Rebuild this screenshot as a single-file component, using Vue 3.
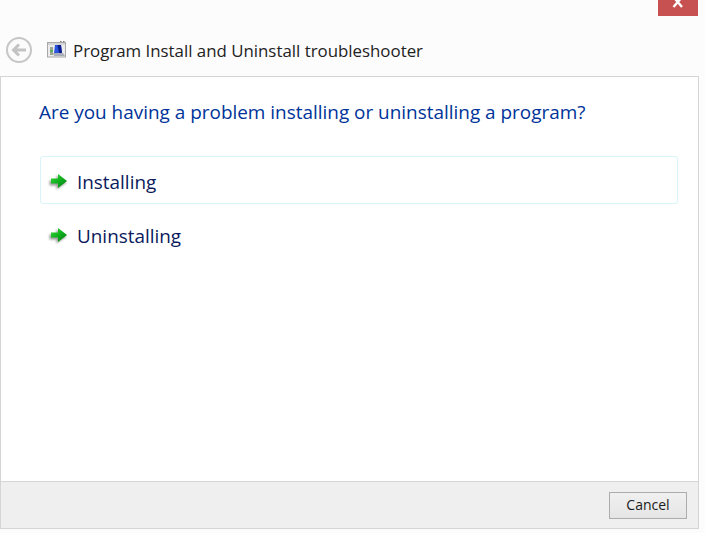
<script setup>
const title = 'Program Install and Uninstall troubleshooter'
const question = 'Are you having a problem installing or uninstalling a program?'
const options = [
  { label: 'Installing', hover: true },
  { label: 'Uninstalling', hover: false }
]
</script>

<template>
  <div class="window">
    <div class="titlebar">
      <button class="close" aria-label="Close">
        <svg width="12" height="8" viewBox="0 0 12 8"><path d="M1.5 -3 L10 7 M10 -3 L1.5 7" stroke="#fff" stroke-width="2.4" fill="none" /></svg>
      </button>
    </div>

    <div class="nav">
      <svg class="back" width="28" height="28" viewBox="0 0 28 28">
        <circle cx="14" cy="14" r="12" fill="#fbfbfb" stroke="#c6c6c6" stroke-width="2" />
        <path d="M21 14 H9 M14 8.5 L8.5 14 L14 19.5" fill="none" stroke="#c3c3c3" stroke-width="3" />
      </svg>
      <svg class="app-icon" width="20" height="18" viewBox="0 0 20 18">
        <rect x="0.5" y="1.5" width="18" height="14.5" fill="#ececec" stroke="#a8a8a8" />
        <rect x="1" y="2" width="17" height="2" fill="#d4d4d4" />
        <rect x="3" y="6" width="3" height="8" fill="#9aa494" />
        <rect x="3.5" y="9" width="2" height="2" fill="#49b04a" />
        <path d="M8 4 H14 L15 12 H7 Z" fill="#2b55e0" />
        <path d="M10.5 4 H14 L15 12 H12 Z" fill="#0b1f8a" />
        <path d="M6 12 H16 L18 15 H7 Z" fill="#a9aeb8" />
        <path d="M13 0.5 H14.5 M16 0.5 H17.5" stroke="#777" />
      </svg>
      <span class="nav-title">{{ title }}</span>
    </div>

    <main class="panel">
      <div class="content">
        <h1>{{ question }}</h1>
        <ul class="options">
          <li v-for="item in options" :key="item.label" :class="{ hover: item.hover }">
            <svg class="arrow" width="22" height="20" viewBox="0 0 22 20">
              <defs>
                <filter id="arrow-shadow" x="-30%" y="-30%" width="160%" height="160%">
                  <feGaussianBlur stdDeviation="1.3" />
                </filter>
                <linearGradient id="arrow-fill" x1="0" y1="0" x2="1" y2="1">
                  <stop offset="0" stop-color="#35d835" />
                  <stop offset="0.5" stop-color="#10b01e" />
                  <stop offset="1" stop-color="#047a12" />
                </linearGradient>
              </defs>
              <path d="M4 7 H11 V2 L21 9 L11 16 V12 H4 Z" fill="#000" opacity="0.4" filter="url(#arrow-shadow)" transform="translate(-1.5 1.5)" />
              <path d="M4 6.5 H11 V2 L20 9 L11 16 V11.5 H4 Z" fill="url(#arrow-fill)" />
            </svg>
            <span>{{ item.label }}</span>
          </li>
        </ul>
      </div>
      <footer class="footer">
        <button class="cancel">Cancel</button>
      </footer>
    </main>
  </div>
</template>

<style>
html, body {
  margin: 0;
  background: #fcfcfc;
}
</style>

<style scoped>
.window {
  width: 705px;
  height: 533px;
  overflow: hidden;
  background: #fcfcfc;
  font-family: "Open Sans", "Noto Sans", "Liberation Sans", sans-serif;
  color: #1a1a1a;
}

.titlebar {
  height: 16px;
  display: flex;
  justify-content: flex-end;
  padding-right: 7px;
}

.close {
  width: 40px;
  height: 16px;
  padding: 0 0 8px;
  border: 0;
  background: #c75050;
  display: flex;
  align-items: flex-start;
  justify-content: center;
}

.nav {
  height: 60px;
  display: flex;
  align-items: center;
  padding: 8px 0 0 5px;
  box-sizing: border-box;
}

.back {
  margin-right: 14px;
}

.app-icon {
  margin-right: 6px;
}

.nav-title {
  font-size: 16.85px;
  white-space: nowrap;
  color: #222;
}

.panel {
  width: 699px;
  height: 453px;
  box-sizing: border-box;
  border: 1px solid #d5d5d5;
  background: #fff;
  display: flex;
  flex-direction: column;
}

.content {
  flex: 1;
  padding: 22px 20px 0 38px;
}

h1 {
  margin: 0 0 31px;
  font-size: 18.93px;
  line-height: 26px;
  font-weight: 400;
  color: #003399;
  white-space: nowrap;
}

.options {
  list-style: none;
  margin: 0 0 0 1px;
  padding: 0;
  display: flex;
  flex-direction: column;
  gap: 6px;
}

.options li {
  height: 48px;
  box-sizing: border-box;
  border: 1px solid transparent;
  border-radius: 3px;
  display: flex;
  align-items: center;
  padding-left: 6px;
  font-size: 18.9px;
  color: #0a1a5c;
}

.options li span {
  padding-top: 3px;
}

.options li.hover {
  border-color: #d8f4f7;
}

.arrow {
  margin-right: 8px;
  margin-top: 3px;
}

.footer {
  height: 47px;
  box-sizing: border-box;
  border-top: 1px solid #d5d5d5;
  background: #efefef;
  display: flex;
  align-items: center;
  justify-content: flex-end;
  padding: 0 11px 0 0;
}

.cancel {
  width: 78px;
  height: 27px;
  padding: 0 0 2px;
  border: 1px solid #acacac;
  background: linear-gradient(#f0f0f0, #e5e5e5);
  font-family: inherit;
  font-size: 14px;
  color: #1a1a1a;
}
</style>
